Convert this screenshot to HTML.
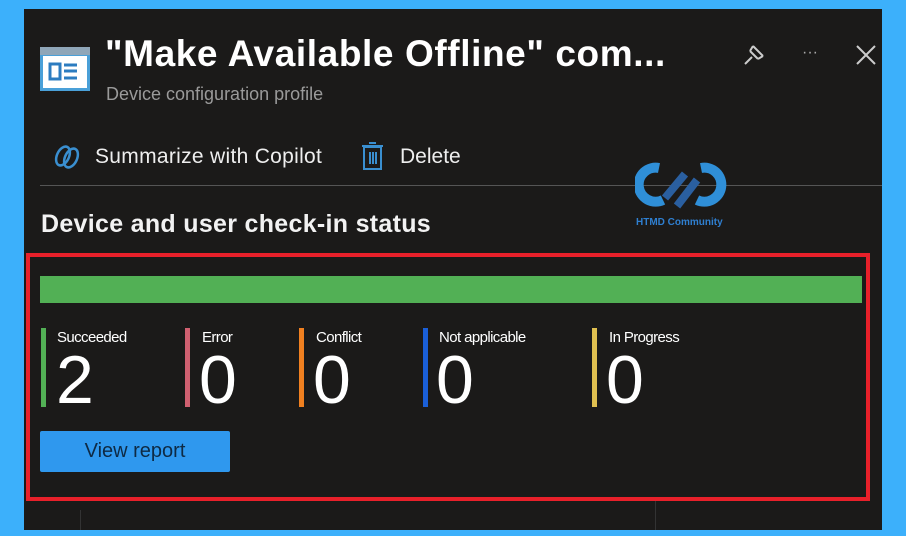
<!DOCTYPE html>
<html><head><meta charset="utf-8"><style>
body{margin:0;width:906px;height:536px;background:#3cb0fb;position:relative;overflow:hidden;font-family:"Liberation Sans",sans-serif}
.panel{position:absolute;left:24px;top:9px;width:858px;height:521px;background:#1b1a19}
.a{position:absolute;color:#fff;white-space:nowrap}
.red{position:absolute;left:26px;top:253px;width:836px;height:240px;border:4px solid #e8202a}
.bar{position:absolute;width:5px;top:328px;height:79px}
.lbl{position:absolute;top:329px;font-size:15px;color:#fff;letter-spacing:-0.6px}
.num{position:absolute;top:346px;font-size:68px;color:#fff;line-height:68px}
</style></head><body>
<div class="panel"></div>
<div style="position:absolute;left:80px;top:510px;width:1px;height:20px;background:#333"></div>
<div style="position:absolute;left:655px;top:500px;width:1px;height:30px;background:#333"></div>
<svg style="position:absolute;left:40px;top:47px" width="50" height="44" viewBox="0 0 50 44">
<rect x="0" y="0" width="50" height="44" fill="#4aa0d8"/><rect x="0" y="0" width="50" height="8" fill="#8fa6b8"/>
<rect x="3" y="9" width="44" height="32" fill="#fff"/>
<rect x="10" y="17" width="10" height="15" fill="none" stroke="#2c7cc0" stroke-width="3"/>
<path d="M24 18h13M24 24h13M24 31h13" stroke="#2c7cc0" stroke-width="3"/></svg>
<div class="a" style="left:105px;top:33px;font-size:37px;font-weight:bold;letter-spacing:0.6px">"Make Available Offline" com...</div>
<div class="a" style="left:106px;top:84px;font-size:18px;color:#9a9a9a">Device configuration profile</div>
<svg style="position:absolute;left:741px;top:42px" width="28" height="26" viewBox="0 0 28 26"><path d="M4 22l7-7M9 9l8 8M12 4l10 10M12 4l-3 5M22 14l-5 3" stroke="#ccc" stroke-width="2" fill="none"/></svg>
<div class="a" style="left:802px;top:44px;font-size:16px;color:#aaa">···</div>
<svg style="position:absolute;left:855px;top:44px" width="22" height="22"><path d="M2 2L20 20M20 2L2 20" stroke="#ccc" stroke-width="2"/></svg>
<svg style="position:absolute;left:53px;top:143px" width="30" height="28"><ellipse cx="10" cy="13" rx="6" ry="10" transform="rotate(25 10 13)" fill="none" stroke="#3a8fd0" stroke-width="2.5"/><ellipse cx="18" cy="15" rx="6" ry="10" transform="rotate(25 18 15)" fill="none" stroke="#3a8fd0" stroke-width="2.5"/></svg>
<div class="a" style="left:95px;top:145px;font-size:21px;color:#eee;letter-spacing:0.3px">Summarize with Copilot</div>
<svg style="position:absolute;left:361px;top:141px" width="24" height="30"><rect x="3" y="6" width="17" height="22" fill="none" stroke="#3a8fd0" stroke-width="2"/><path d="M1 5h21M8 2h7M9 11v12M12 11v12M15 11v12" stroke="#3a8fd0" stroke-width="2"/></svg>
<div class="a" style="left:400px;top:145px;font-size:21px;color:#eee">Delete</div>
<div style="position:absolute;left:40px;top:185px;width:842px;height:1px;background:#555"></div>
<svg style="position:absolute;left:635px;top:158px" width="94" height="56" viewBox="0 0 94 56"><path d="M24 10a17 17 0 1 0 4 32" stroke="#2f8fd8" stroke-width="10" fill="none"/><path d="M66 10a17 17 0 1 1 -4 32" stroke="#2f8fd8" stroke-width="10" fill="none"/><path d="M30 40L50 16M42 48L62 22" stroke="#2a5fa0" stroke-width="8"/></svg>
<div class="a" style="left:636px;top:217px;font-size:10px;font-weight:bold;color:#2f7fd0">HTMD Community</div>
<div class="a" style="left:41px;top:210px;font-size:25px;font-weight:bold;color:#f2f2f2;letter-spacing:0.3px">Device and user check-in status</div>
<div class="red"></div>
<div style="position:absolute;left:40px;top:276px;width:822px;height:27px;background:#52b055"></div>
<div class="bar" style="left:41px;background:#52b055"></div><div class="lbl" style="left:57px">Succeeded</div><div class="num" style="left:56px">2</div>
<div class="bar" style="left:185px;background:#d06070"></div><div class="lbl" style="left:202px">Error</div><div class="num" style="left:199px">0</div>
<div class="bar" style="left:299px;background:#f08020"></div><div class="lbl" style="left:316px">Conflict</div><div class="num" style="left:313px">0</div>
<div class="bar" style="left:423px;background:#1a5fd8"></div><div class="lbl" style="left:439px">Not applicable</div><div class="num" style="left:436px">0</div>
<div class="bar" style="left:592px;background:#e0c050"></div><div class="lbl" style="left:609px">In Progress</div><div class="num" style="left:606px">0</div>
<div style="position:absolute;left:40px;top:431px;width:190px;height:41px;background:#2f98ee;border-radius:2px;color:#0e2a44;font-size:20px;line-height:41px;text-align:center">View report</div>
</body></html>
